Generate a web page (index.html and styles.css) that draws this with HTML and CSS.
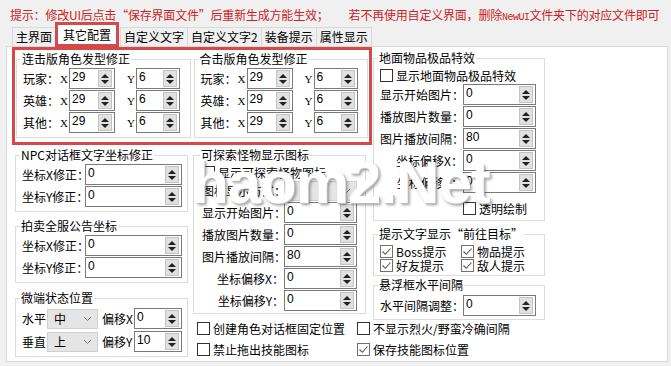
FILE: index.html
```html
<!DOCTYPE html>
<html lang="zh-CN">
<head>
    <meta charset="UTF-8">
    <title>界面配置 - 其它配置</title>
    <link rel="stylesheet" href="styles.css">
</head>
<body>

<div class="window">
    <p class="hint">提示：修改UI后点击“保存界面文件”后重新生成方能生效；<span class="gap"></span>若不再使用自定义界面，删除<span class="mono">NewUI</span>文件夹下的对应文件即可</p>

    <div class="tabs">
        <span class="tab">主界面</span>
        <span class="tab active">其它配置</span>
        <span class="tab">自定义文字</span>
        <span class="tab">自定义文字2</span>
        <span class="tab">装备提示</span>
        <span class="tab">属性显示</span>
    </div>

    <div class="panel">
        <!-- 发型修正 -->
        <div class="red-box">
            <fieldset class="grp">
                <legend>连击版角色发型修正</legend>
                <div class="xy">
                    <span>玩家：</span><span class="ax">X</span><span class="spin"><span class="val">29</span><span class="arr"></span></span><span class="ax ay">Y</span><span class="spin"><span class="val">6</span><span class="arr"></span></span>
                    <span>英雄：</span><span class="ax">X</span><span class="spin"><span class="val">29</span><span class="arr"></span></span><span class="ax ay">Y</span><span class="spin"><span class="val">6</span><span class="arr"></span></span>
                    <span>其他：</span><span class="ax">X</span><span class="spin"><span class="val">29</span><span class="arr"></span></span><span class="ax ay">Y</span><span class="spin"><span class="val">6</span><span class="arr"></span></span>
                </div>
            </fieldset>
            <fieldset class="grp">
                <legend>合击版角色发型修正</legend>
                <div class="xy">
                    <span>玩家：</span><span class="ax">X</span><span class="spin"><span class="val">29</span><span class="arr"></span></span><span class="ax ay">Y</span><span class="spin"><span class="val">6</span><span class="arr"></span></span>
                    <span>英雄：</span><span class="ax">X</span><span class="spin"><span class="val">29</span><span class="arr"></span></span><span class="ax ay">Y</span><span class="spin"><span class="val">6</span><span class="arr"></span></span>
                    <span>其他：</span><span class="ax">X</span><span class="spin"><span class="val">29</span><span class="arr"></span></span><span class="ax ay">Y</span><span class="spin"><span class="val">6</span><span class="arr"></span></span>
                </div>
            </fieldset>
        </div>

        <!-- 左列 -->
        <div class="col1">
            <fieldset class="grp">
                <legend>NPC对话框文字坐标修正</legend>
                <div class="form wide">
                    <span>坐标X修正：</span><span class="spin"><span class="val">0</span><span class="arr"></span></span>
                    <span>坐标Y修正：</span><span class="spin"><span class="val">0</span><span class="arr"></span></span>
                </div>
            </fieldset>
            <fieldset class="grp auction">
                <legend>拍卖全服公告坐标</legend>
                <div class="form wide">
                    <span>坐标X修正：</span><span class="spin"><span class="val">0</span><span class="arr"></span></span>
                    <span>坐标Y修正：</span><span class="spin"><span class="val">0</span><span class="arr"></span></span>
                </div>
            </fieldset>
            <fieldset class="grp micro">
                <legend>微端状态位置</legend>
                <div class="pos">
                    <span>水平</span>
                    <span class="sel">中<svg width="9" height="6" viewBox="0 0 9 6"><path d="M1 1l3.5 3.5L8 1" fill="none" stroke="#777" stroke-width="1"/></svg></span>
                    <span class="off">偏移X</span>
                    <span class="spin"><span class="val">0</span><span class="arr"></span></span>
                    <span>垂直</span>
                    <span class="sel">上<svg width="9" height="6" viewBox="0 0 9 6"><path d="M1 1l3.5 3.5L8 1" fill="none" stroke="#777" stroke-width="1"/></svg></span>
                    <span class="off">偏移Y</span>
                    <span class="spin"><span class="val">10</span><span class="arr"></span></span>
                </div>
            </fieldset>
        </div>

        <!-- 中列 -->
        <div class="col2">
            <fieldset class="grp">
                <legend>可探索怪物显示图标</legend>
                <label class="chk"><span class="box"></span>显示可探索怪物图标</label>
                <div class="form">
                    <span>图标显示方式：</span><span class="sel">-<svg width="9" height="6" viewBox="0 0 9 6"><path d="M1 1l3.5 3.5L8 1" fill="none" stroke="#777" stroke-width="1"/></svg></span>
                    <span>显示开始图片：</span><span class="spin"><span class="val">0</span><span class="arr"></span></span>
                    <span>播放图片数量：</span><span class="spin"><span class="val">0</span><span class="arr"></span></span>
                    <span>图片播放间隔：</span><span class="spin"><span class="val">80</span><span class="arr"></span></span>
                    <span>坐标偏移X：</span><span class="spin"><span class="val">0</span><span class="arr"></span></span>
                    <span>坐标偏移Y：</span><span class="spin"><span class="val">0</span><span class="arr"></span></span>
                </div>
            </fieldset>
        </div>

        <!-- 右列 -->
        <div class="col3">
            <fieldset class="grp">
                <legend>地面物品极品特效</legend>
                <label class="chk first"><span class="box"></span>显示地面物品极品特效</label>
                <div class="form">
                    <span>显示开始图片：</span><span class="spin"><span class="val">0</span><span class="arr"></span></span>
                    <span>播放图片数量：</span><span class="spin"><span class="val">0</span><span class="arr"></span></span>
                    <span>图片播放间隔：</span><span class="spin"><span class="val">80</span><span class="arr"></span></span>
                    <span>坐标偏移X：</span><span class="spin"><span class="val">0</span><span class="arr"></span></span>
                    <span>坐标偏移Y：</span><span class="spin"><span class="val">0</span><span class="arr"></span></span>
                </div>
                <label class="chk alpha"><span class="box"></span>透明绘制</label>
            </fieldset>
            <fieldset class="grp target">
                <legend>提示文字显示“前往目标”</legend>
                <div class="checks">
                    <label class="chk"><span class="box on"><svg width="11" height="11" viewBox="0 0 11 11"><path d="M1.5 5.5l2.8 2.8L9.5 2.5" fill="none" stroke="#555" stroke-width="1.1"/></svg></span>Boss提示</label>
                    <label class="chk"><span class="box on"><svg width="11" height="11" viewBox="0 0 11 11"><path d="M1.5 5.5l2.8 2.8L9.5 2.5" fill="none" stroke="#555" stroke-width="1.1"/></svg></span>物品提示</label>
                    <label class="chk"><span class="box on"><svg width="11" height="11" viewBox="0 0 11 11"><path d="M1.5 5.5l2.8 2.8L9.5 2.5" fill="none" stroke="#555" stroke-width="1.1"/></svg></span>好友提示</label>
                    <label class="chk"><span class="box on"><svg width="11" height="11" viewBox="0 0 11 11"><path d="M1.5 5.5l2.8 2.8L9.5 2.5" fill="none" stroke="#555" stroke-width="1.1"/></svg></span>敌人提示</label>
                </div>
            </fieldset>
            <fieldset class="grp float">
                <legend>悬浮框水平间隔</legend>
                <div class="form">
                    <span>水平间隔调整：</span><span class="spin"><span class="val">0</span><span class="arr"></span></span>
                </div>
            </fieldset>
        </div>

        <!-- 底部选项 -->
        <div class="bottom">
            <label class="chk"><span class="box"></span>创建角色对话框固定位置</label>
            <label class="chk"><span class="box"></span>不显示烈火/野蛮冷确间隔</label>
            <label class="chk"><span class="box"></span>禁止拖出技能图标</label>
            <label class="chk"><span class="box on"><svg width="11" height="11" viewBox="0 0 11 11"><path d="M1.5 5.5l2.8 2.8L9.5 2.5" fill="none" stroke="#555" stroke-width="1.1"/></svg></span>保存技能图标位置</label>
        </div>
    </div>

    <div class="watermark">haom2.Net</div>
</div>

</body>
</html>
```

FILE: styles.css
```css
* {
    box-sizing: border-box;
}
body {
    margin: 0;
    background-color: #f0f0f0;
    font-family: "Noto Sans CJK SC", "Liberation Sans", sans-serif;
    font-size: 12px;
    color: #000;
}
.window {
    position: relative;
    width: 671px;
    height: 366px;
    overflow: hidden;
}
.hint {
    margin: 0;
    padding: 7px 0 0 10px;
    height: 22px;
    line-height: 15px;
    color: #cc2222;
    white-space: nowrap;
    letter-spacing: -0.2px;
}
.hint .gap {
    display: inline-block;
    width: 20px;
}
.hint .mono {
    font-family: "Liberation Mono", monospace;
    font-size: 10px;
    letter-spacing: -0.5px;
}

/* tabs */
.tabs {
    display: flex;
    align-items: flex-end;
    height: 24px;
    padding-left: 12px;
}
.tab {
    height: 19px;
    line-height: 18px;
    padding: 0 3px;
    border: 1px solid #d9d9d9;
    border-bottom: 0;
    background-color: #f0f0f0;
    white-space: nowrap;
}
.tab + .tab {
    margin-left: -1px;
}
.tab.active {
    position: relative;
    z-index: 1;
    height: 25px;
    line-height: 19px;
    padding: 0 5px;
    margin-bottom: -1px;
    margin-right: 2px;
    border: 3px solid #d44a4a;
    background-color: #fff;
}

/* panel */
.panel {
    margin-left: 6px;
    width: 662px;
    height: 316px;
    border: 1px solid #d9d9d9;
    background-color: #fff;
    padding-left: 5px;
    display: grid;
    grid-template-columns: 178px 182px 175px;
    grid-template-rows: 97px 174px auto;
    grid-template-areas:
        "red red c3"
        "c1 c2 c3"
        "c1 bot bot";
}
.red-box {
    grid-area: red;
    align-self: start;
    display: grid;
    grid-template-columns: 1fr 1fr;
    column-gap: 3px;
    padding: 2px 1px 4px;
    border: 3px solid #d44a4a;
}
.col1 {
    grid-area: c1;
    padding: 4px 2px 0 3px;
}
.col2 {
    grid-area: c2;
    padding: 4px 6px 0 3px;
}
.col3 {
    grid-area: c3;
    padding: 4px 0 0 1px;
}
.col3 .grp {
    width: 172px;
}

/* group boxes */
.grp {
    margin: 0;
    min-width: 0;
    padding: 2px 6px 4px;
    border: 1px solid #dcdcdc;
}
.grp legend {
    margin-left: -2px;
    padding: 0 1px;
    line-height: 14px;
    white-space: nowrap;
}
.col2 .grp {
    padding: 2px 6px 2px 8px;
}
.auction {
    margin-top: 7px;
}
.micro {
    margin-top: 8px;
    padding-top: 3px;
}
.target {
    margin-top: 6px;
    padding: 3px 6px;
}
.float {
    margin-top: 2px;
    padding: 3px 6px;
}

/* X / Y rows */
.xy {
    display: grid;
    grid-template-columns: 36px 10px 46px 21px 44px;
    grid-auto-rows: 21px;
    row-gap: 1px;
    align-items: center;
}
.ax {
    font-family: "Liberation Serif", serif;
    font-size: 11px;
    padding-left: 1px;
}
.ay {
    padding-left: 12px;
}

/* label + spin rows */
.form {
    display: grid;
    grid-template-columns: 82px 73px;
    grid-auto-rows: 21px;
    row-gap: 1px;
    align-items: center;
    text-align: right;
    white-space: nowrap;
}
.col3 .form {
    grid-template-columns: 83px 73px;
}
.form.wide {
    grid-template-columns: 63px 97px;
    text-align: left;
}
.form .spin {
    text-align: left;
}

.spin {
    display: flex;
    height: 21px;
    border: 1px solid #7a7a7a;
    background-color: #fff;
    font-family: "Liberation Sans", sans-serif;
    font-size: 12px;
}
.spin .val {
    flex: 1;
    padding: 1px 0 0 2px;
    line-height: 14px;
}
.spin .arr {
    width: 14px;
    margin: 1px 2px 1px 0;
    background-color: #e1e1e1;
    border: 1px solid #c4c4c4;
    display: flex;
    flex-direction: column;
    align-items: center;
    justify-content: center;
    gap: 2px;
}
.spin .arr::before {
    content: "";
    border-left: 4px solid transparent;
    border-right: 4px solid transparent;
    border-bottom: 4px solid #222;
}
.spin .arr::after {
    content: "";
    border-left: 4px solid transparent;
    border-right: 4px solid transparent;
    border-top: 4px solid #222;
}

/* combo */
.sel {
    display: flex;
    align-items: center;
    justify-content: space-between;
    height: 20px;
    padding: 0 5px 0 6px;
    background-color: #e5e5e5;
    border: 1px solid #d0d0d0;
    text-align: left;
}
.pos {
    display: grid;
    grid-template-columns: 25px 51px 36px 48px;
    grid-auto-rows: 21px;
    row-gap: 2px;
    align-items: center;
    white-space: nowrap;
}
.pos .off {
    padding-left: 4px;
}

/* checkboxes */
.chk {
    display: flex;
    align-items: center;
    height: 16px;
    white-space: nowrap;
}
.chk .box {
    flex: none;
    width: 13px;
    height: 13px;
    margin-right: 3px;
    border: 1px solid #333;
    background-color: #fff;
}
.chk .box.on {
    border-color: #707070;
}
.chk .box svg {
    display: block;
}
.chk.first {
    height: 17px;
}
.chk.alpha {
    margin: 7px 0 0 83px;
}
.checks {
    display: grid;
    grid-template-columns: 81px auto;
    grid-auto-rows: 14px;
}
.checks .chk {
    height: 14px;
}

.bottom {
    grid-area: bot;
    display: grid;
    grid-template-columns: 160px auto;
    grid-auto-rows: 21px;
    align-content: start;
    align-items: center;
    padding-left: 7px;
}

.watermark {
    position: absolute;
    left: 192px;
    top: 153px;
    font-family: "Liberation Sans", sans-serif;
    font-weight: bold;
    font-size: 60px;
    line-height: 60px;
    letter-spacing: -1px;
    color: #fff;
    text-shadow: 1px 1px 0 #bbb, 2px 2px 3px rgba(0, 0, 0, 0.4);
    pointer-events: none;
}
```
